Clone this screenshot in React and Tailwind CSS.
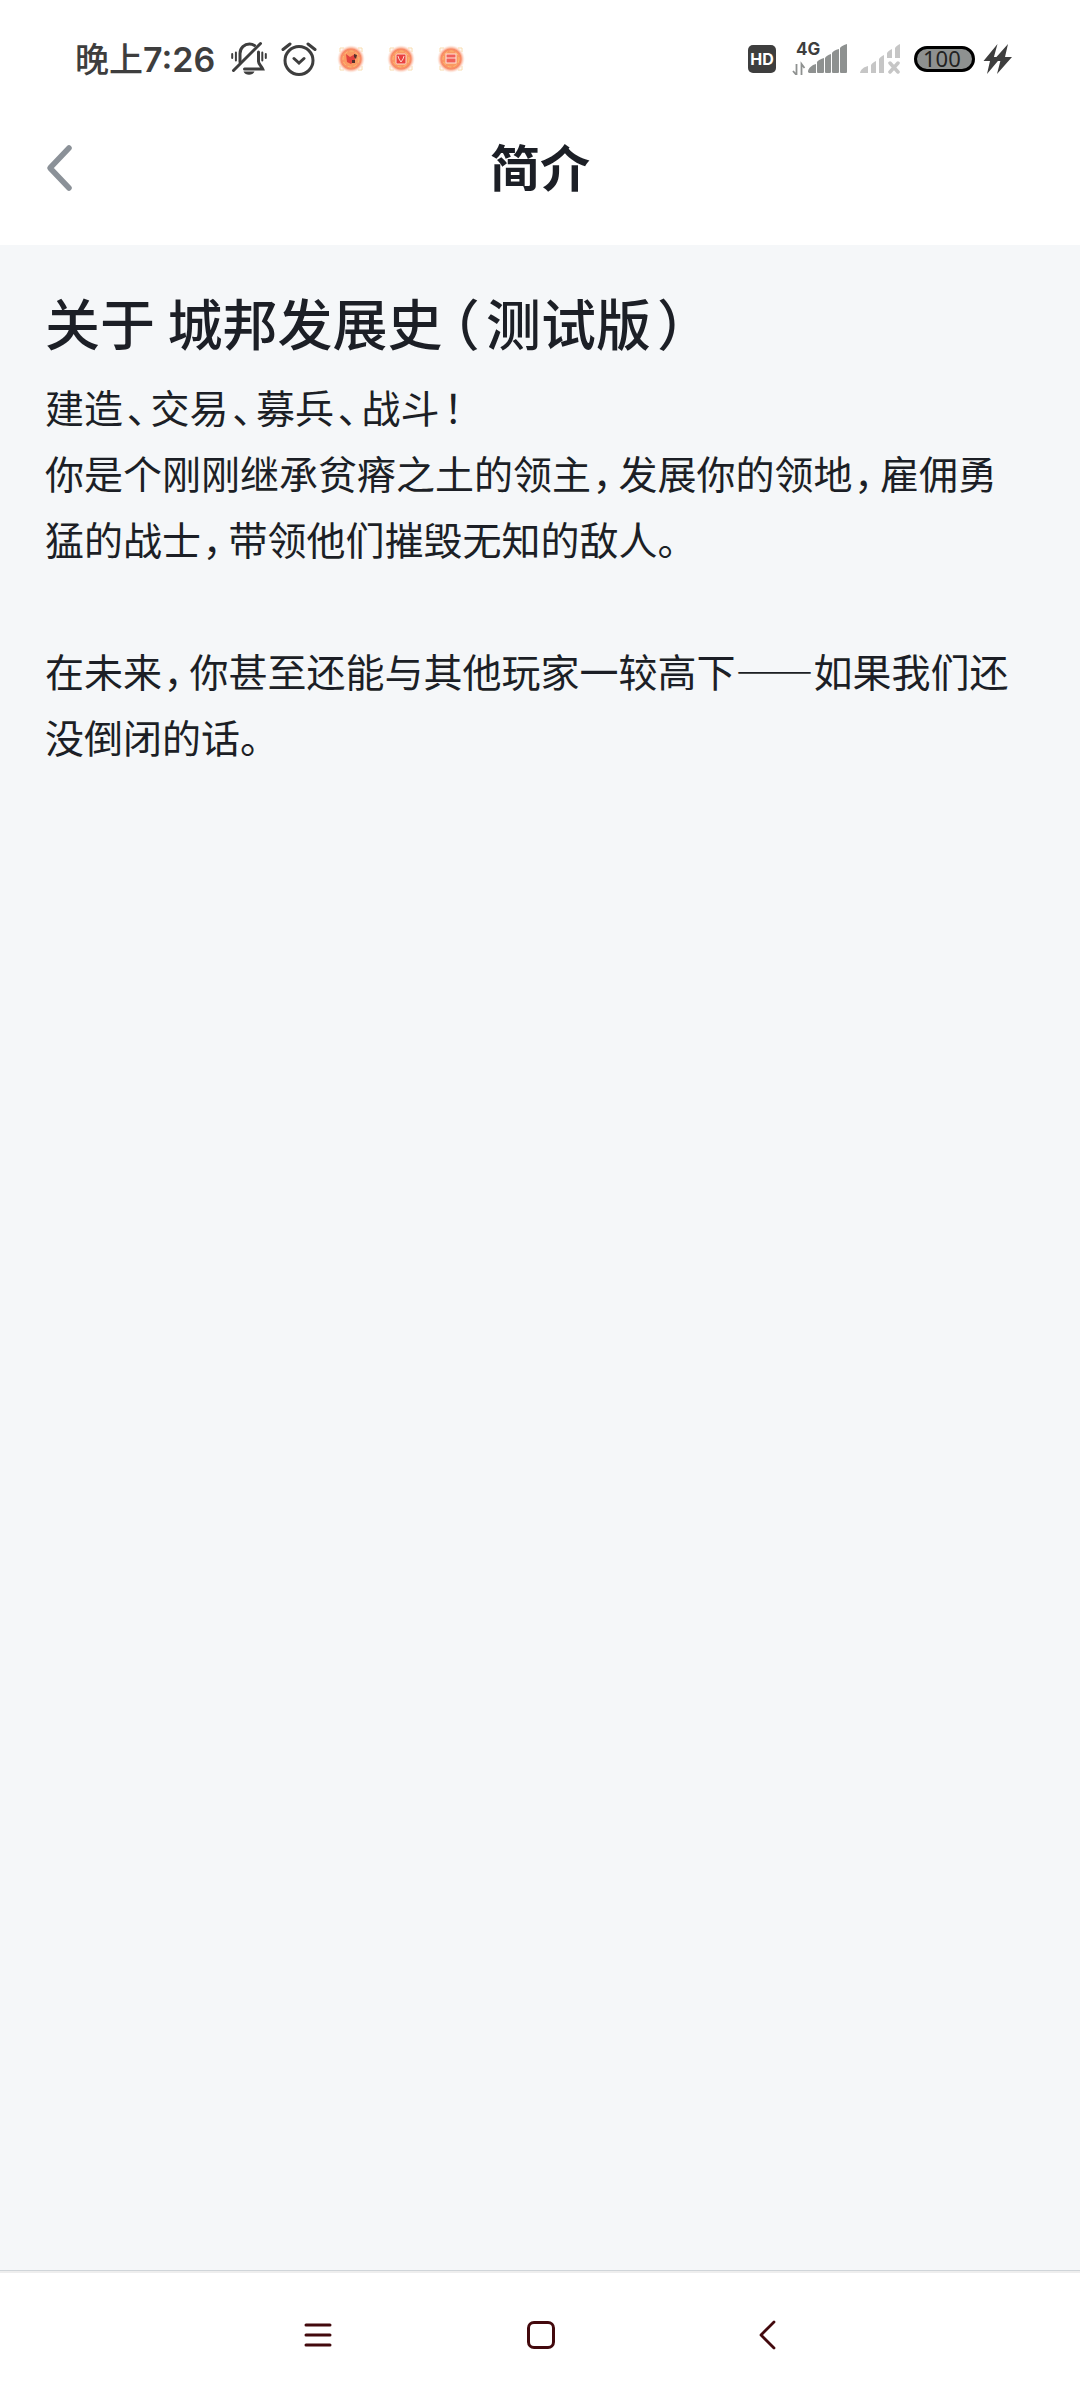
import React from 'react'

const title = '关于 城邦发展史（测试版）'

const paragraphs = [
  '建造、交易、募兵、战斗！',
  '你是个刚刚继承贫瘠之土的领主，发展你的领地，雇佣勇猛的战士，带领他们摧毁无知的敌人。',
  '',
  '在未来，你甚至还能与其他玩家一较高下——如果我们还没倒闭的话。'
]

// Proportional punctuation with a little air on both sides
const Prose = ({ text }) =>
  text.split(/([，、！（）])/).map((part, i) =>
    i % 2 === 1
      ? <span key={i} className="px-1 [font-feature-settings:'palt']">{part}</span>
      : part
  )

const MutedBellIcon = () => (
  <svg className="w-9 h-9" viewBox="0 0 36 36" fill="none" stroke="#3e3e3e" strokeWidth="3" strokeLinecap="round">
    <path d="M9 21V12.500C9 7 13.500 3 18.500 3c2 0 3.500.5 5 1.500M27.500 11v9.500c0 2.500 3 4.500 4.200 7.500H13.500" />
    <path d="M2.500 29.500 29.500 2.500" />
    <path d="M12.500 30.500h11c-1 2.200-3 3.300-5.500 3.300s-4.500-1.100-5.500-3.300z" fill="#3e3e3e" stroke="none" />
    <path d="M1.200 13v4M4.900 11.500v8M31.300 11.500v8M34.800 13v4" strokeWidth="2" />
  </svg>
)

const AlarmIcon = () => (
  <svg className="w-9 h-9" viewBox="0 0 36 36" fill="none" stroke="#3e3e3e" strokeWidth="3" strokeLinecap="round">
    <circle cx="18" cy="19.500" r="14" />
    <path d="m13 17.500 5 4.500 5-4.500M2 8.500 9 3M27 3l7 5.500" />
  </svg>
)

const AppBadge = ({ id, children }) => (
  <svg className="w-7 h-7" viewBox="0 0 28 28">
    <defs>
      <radialGradient id={id}>
        <stop offset="0.5" stopColor="#fb9a62" />
        <stop offset="0.72" stopColor="#f88a66" />
        <stop offset="1" stopColor="#ffe0d0" stopOpacity="0" />
      </radialGradient>
    </defs>
    <circle cx="14" cy="14" r="14" fill={`url(#${id})`} />
    <circle cx="14" cy="14" r="8" fill="none" stroke="#fbbd70" strokeDasharray="4 2" />
    <path d="M3 7V3h4M21 3h4v4M3 21v4h4M21 25h4v-4" fill="none" stroke="#f8dcae" />
    {children}
  </svg>
)

const SignalIcon = () => (
  <svg className="w-14 h-8" viewBox="0 0 56 32" fill="#8e9190">
    <path d="M16 29c0-4 4-7 8-8v9h-7zM25 19c1-2 4-3 7-4v14q0 1-1 1h-5q-1 0-1-1zM33 15c1-2 3-3 6-4v18q0 1-1 1h-4q-1 0-1-1zM40 10c1-2 3-3 7-4v23q0 1-1 1h-5q-1 0-1-1zM48 5c1-2 4-3 7-4v28q0 1-1 1h-5q-1 0-1-1z" />
    <path d="M4.500 21v11M1 28l3.500 4M9.500 32V21l3 4" fill="none" stroke="#8e9190" strokeWidth="1.800" />
  </svg>
)

const NoSignalIcon = () => (
  <svg className="w-10 h-8" viewBox="0 0 40 32" fill="#c6c6c6">
    <path d="M0 30c1-4 4-6 8-7v7zM11 22c1-2 3-3 5-4v12h-5zM19 16c1-2 3-3 5-4v18h-5zM27 10c1-2 3-3 5-4v9h-5zM35 5c1-2 3-3 5-4v14h-5z" />
    <path d="m30 20 8 9m0-9-8 9" stroke="#c6c6c6" strokeWidth="3.500" strokeLinecap="round" />
  </svg>
)

const StatusBar = () => (
  <div className="flex h-[90px] items-center justify-between pt-7 pl-[75px] pr-[67px] text-[#3e3e3e]">
    <div className="flex items-center">
      <span className="mr-4 text-[34px] leading-9 font-medium">
        晚上<span className="font-[Inter] font-semibold">7:26</span>
      </span>
      <MutedBellIcon />
      <span className="w-3.5"></span>
      <AlarmIcon />
      <div className="ml-5 flex gap-[22px]">
        <AppBadge id="badge-fox">
          <path d="m9 9 4 3 5-3v6l-4 4-4-2z" fill="#e2423e" />
          <path d="m17 9 3 1-1 4-2-2zM15 15h3v3h-3z" fill="#54302d" />
        </AppBadge>
        <AppBadge id="badge-mask">
          <rect x="9" y="9" width="10" height="10" rx="1" fill="#e9403f" stroke="#ffd9cc" />
          <path d="m11 11 1 3 2 3 2-3 1-3" fill="none" stroke="#ffd9cc" />
        </AppBadge>
        <AppBadge id="badge-card">
          <rect x="9" y="9" width="10" height="9" fill="#f0605a" stroke="#ffe3d9" />
          <path d="M9 13h10" stroke="#ffe3d9" />
        </AppBadge>
      </div>
    </div>

    <div className="flex items-center">
      <span className="flex h-7 w-7 items-center justify-center rounded-[5px] bg-[#3e3e3e] font-[Inter] text-[16px] leading-none font-bold text-white">HD</span>
      <div className="relative ml-4">
        <SignalIcon />
        <span className="absolute -top-0.5 left-1 font-[Inter] text-[17px] leading-none font-bold">4G</span>
      </div>
      <span className="w-3"></span>
      <NoSignalIcon />
      <span className="ml-3.5 flex h-[26px] w-[61px] items-center rounded-full border-[3px] border-black bg-[#8e9190] pb-0.5 pl-[6px] font-['Noto_Sans'] text-[22px] leading-none text-[#222]">100</span>
      <svg className="ml-2 h-[30px] w-[30px]" viewBox="0 0 30 30" fill="#3e3e3e">
        <path d="M14.500 0 .5 17h6.500L4 30 17 14.500h-6.500zM25 0 13 13.500l5 1L14 30l15-17h-7z" />
        <path d="M9 13h13v4H7z" />
      </svg>
    </div>
  </div>
)

const Header = () => (
  <header className="grid h-[155px] grid-cols-3 items-center px-[42px]">
    <button className="w-9" aria-label="返回">
      <svg className="w-9 h-12" viewBox="0 0 36 48" fill="none" stroke="#8b9198" strokeWidth="5.500" strokeLinecap="round" strokeLinejoin="round">
        <path d="M27 4 8 24l19 20" />
      </svg>
    </button>
    <h1 className="pb-1.5 text-center text-[50px] leading-none font-bold">简介</h1>
  </header>
)

const NavigationBar = () => (
  <nav className="border-t border-[#d0d5d9] bg-white">
    <div className="flex h-[129px] items-center justify-center gap-32 border-t-2 border-[#eeeeee] pb-1 pl-1">
      <button className="flex w-24 justify-center" aria-label="菜单">
        <svg className="w-8 h-8" viewBox="0 0 32 32" fill="none" stroke="#43090d" strokeWidth="3" strokeLinecap="round">
          <path d="M4 6h24M4 16h24M4 26h24" />
        </svg>
      </button>
      <button className="flex w-24 justify-center" aria-label="主屏幕">
        <svg className="w-8 h-8" viewBox="0 0 32 32" fill="none" stroke="#43090d" strokeWidth="3">
          <rect x="2.500" y="3.500" width="25" height="25" rx="5.500" />
        </svg>
      </button>
      <button className="flex w-24 justify-center" aria-label="后退">
        <svg className="w-8 h-8" viewBox="0 0 32 32" fill="none" stroke="#43090d" strokeWidth="2.800" strokeLinecap="round" strokeLinejoin="round">
          <path d="M24 3 11 16l13 13" />
        </svg>
      </button>
    </div>
  </nav>
)

export default function App() {
  return (
    <div className="flex min-h-screen flex-col bg-white font-['Noto_Sans_CJK_SC',sans-serif] text-[#1c1f26]" lang="zh-CN">
      <StatusBar />
      <Header />
      <main className="flex-1 bg-[#f5f7f9] px-[45px] pt-10">
        <h2 className="text-[55px] leading-[72px] font-medium [&>span]:px-2"><Prose text={title} /></h2>
        <div className="mt-4 text-[39px] leading-[66px]">
          {paragraphs.map((text, i) => (
            <p key={i} className="min-h-[66px]"><Prose text={text} /></p>
          ))}
        </div>
      </main>
      <NavigationBar />
    </div>
  )
}
